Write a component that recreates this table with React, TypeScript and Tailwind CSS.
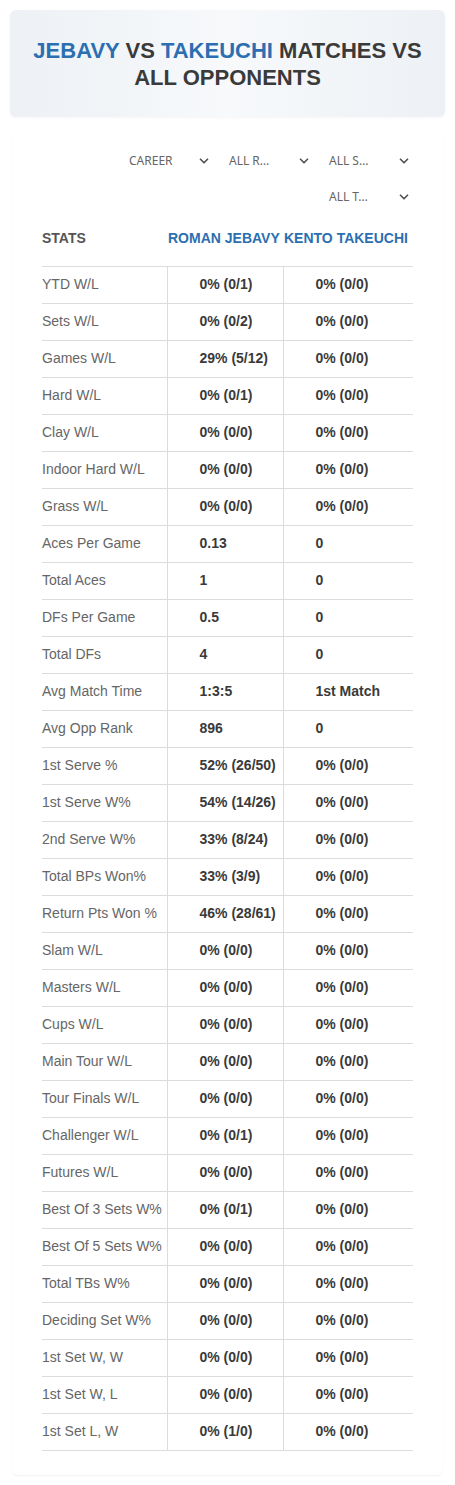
import { ChevronDown } from 'lucide-react'

const rows: [string, string, string][] = [
  ['YTD W/L', '0% (0/1)', '0% (0/0)'],
  ['Sets W/L', '0% (0/2)', '0% (0/0)'],
  ['Games W/L', '29% (5/12)', '0% (0/0)'],
  ['Hard W/L', '0% (0/1)', '0% (0/0)'],
  ['Clay W/L', '0% (0/0)', '0% (0/0)'],
  ['Indoor Hard W/L', '0% (0/0)', '0% (0/0)'],
  ['Grass W/L', '0% (0/0)', '0% (0/0)'],
  ['Aces Per Game', '0.13', '0'],
  ['Total Aces', '1', '0'],
  ['DFs Per Game', '0.5', '0'],
  ['Total DFs', '4', '0'],
  ['Avg Match Time', '1:3:5', '1st Match'],
  ['Avg Opp Rank', '896', '0'],
  ['1st Serve %', '52% (26/50)', '0% (0/0)'],
  ['1st Serve W%', '54% (14/26)', '0% (0/0)'],
  ['2nd Serve W%', '33% (8/24)', '0% (0/0)'],
  ['Total BPs Won%', '33% (3/9)', '0% (0/0)'],
  ['Return Pts Won %', '46% (28/61)', '0% (0/0)'],
  ['Slam W/L', '0% (0/0)', '0% (0/0)'],
  ['Masters W/L', '0% (0/0)', '0% (0/0)'],
  ['Cups W/L', '0% (0/0)', '0% (0/0)'],
  ['Main Tour W/L', '0% (0/0)', '0% (0/0)'],
  ['Tour Finals W/L', '0% (0/0)', '0% (0/0)'],
  ['Challenger W/L', '0% (0/1)', '0% (0/0)'],
  ['Futures W/L', '0% (0/0)', '0% (0/0)'],
  ['Best Of 3 Sets W%', '0% (0/1)', '0% (0/0)'],
  ['Best Of 5 Sets W%', '0% (0/0)', '0% (0/0)'],
  ['Total TBs W%', '0% (0/0)', '0% (0/0)'],
  ['Deciding Set W%', '0% (0/0)', '0% (0/0)'],
  ['1st Set W, W', '0% (0/0)', '0% (0/0)'],
  ['1st Set W, L', '0% (0/0)', '0% (0/0)'],
  ['1st Set L, W', '0% (1/0)', '0% (0/0)'],
]

function Select({ label }: { label: string }) {
  return (
    <div className="flex h-[26px] w-[90px] items-center justify-between pl-[8px] pr-0 font-['Noto_Sans',sans-serif] text-[12px] text-[#666]">
      <span>{label}</span>
      <ChevronDown className="h-[14px] w-[14px] text-[#555]" strokeWidth={3} />
    </div>
  )
}

export default function App() {
  return (
    <div className="min-h-[1485px] bg-white px-[10px] pt-[10px] font-['Liberation_Sans',Arial,sans-serif]">
      {/* Title */}
      <div className="flex h-[107px] items-center justify-center rounded-md bg-gradient-to-r from-[#edf1f5] via-[#f7f9fb] to-[#edf1f5] px-4 shadow-[0_1px_3px_rgba(0,0,0,0.04)]">
        <h1 className="text-center text-[22px] font-bold uppercase leading-[27px] text-[#3a3a3a]">
          <span className="text-[#2c6fb1]">Jebavy</span> vs <span className="text-[#2c6fb1]">Takeuchi</span> Matches vs All Opponents
        </h1>
      </div>

      {/* Stats card */}
      <div className="mx-[2px] mt-[12px] rounded-md bg-white px-[30px] pb-[24px] pt-[19px] shadow-[0_1px_2px_rgba(0,0,0,0.06)]">
        {/* Filters */}
        <div className="flex flex-wrap justify-end gap-x-[10px] gap-y-[10px] pr-[2px]">
          <Select label="CAREER" />
          <Select label="ALL R…" />
          <Select label="ALL S…" />
          <Select label="ALL T…" />
        </div>

        {/* Table */}
        <table className="mt-[11px] w-full table-fixed border-collapse">
          <colgroup>
            <col className="w-[125px]" />
            <col className="w-[116px]" />
            <col />
          </colgroup>
          <thead>
            <tr className="h-[45px] border-b border-[#dcdcdc] text-left text-[14px] font-bold uppercase">
              <th className="pb-[9px] text-[#555]">Stats</th>
              <th className="whitespace-nowrap pb-[9px] pl-[1px] text-[#2c6fb1]">Roman Jebavy</th>
              <th className="whitespace-nowrap pb-[9px] pl-[1px] text-[#2c6fb1]">Kento Takeuchi</th>
            </tr>
          </thead>
          <tbody>
            {rows.map(([label, a, b]) => (
              <tr key={label} className="h-[37px] border-b border-[#dcdcdc] text-[14px]">
                <td className="whitespace-nowrap text-[#666]">{label}</td>
                <td className="border-l border-[#dcdcdc] pl-[32px] font-bold text-[#3a3a3a]">{a}</td>
                <td className="border-l border-[#dcdcdc] pl-[32px] font-bold text-[#3a3a3a]">{b}</td>
              </tr>
            ))}
          </tbody>
        </table>
      </div>
    </div>
  )
}
